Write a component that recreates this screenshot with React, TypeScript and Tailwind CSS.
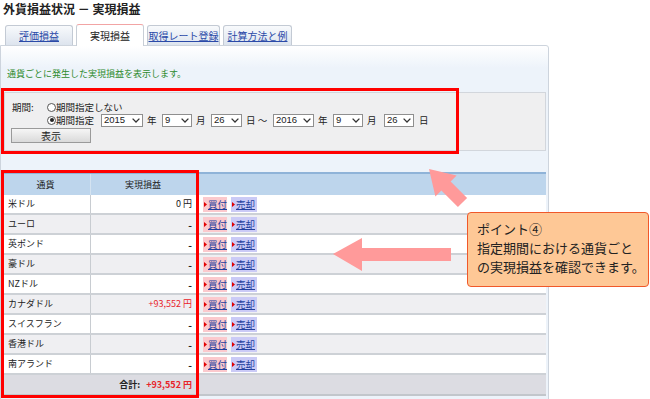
import React from "react";

function Sel({ v, w }: { v: string; w: string }) {
  return (
    <div
      className={`${w} h-[13px] border border-[#8f8f8f] bg-white flex items-center justify-between pl-[2px] pr-[2px] text-[9.5px] leading-none text-[#222]`}
    >
      <span className="font-['Liberation_Sans',sans-serif]">{v}</span>
      <svg width="8" height="5" viewBox="0 0 8 5">
        <path d="M0.6 0.6 L4 4 L7.4 0.6" stroke="#333" strokeWidth="1.3" fill="none" />
      </svg>
    </div>
  );
}

function Radio({ checked }: { checked?: boolean }) {
  return (
    <span className="w-[9px] h-[9px] rounded-full border border-[#555] bg-white flex items-center justify-center shrink-0">
      {checked && <span className="w-[4px] h-[4px] rounded-full bg-[#222]" />}
    </span>
  );
}

function Tri() {
  return (
    <svg width="3" height="5" viewBox="0 0 3 5" className="shrink-0">
      <path d="M0 0 L3 2.5 L0 5 Z" fill="#e00000" />
    </svg>
  );
}

const rows: { n: string; v: string; red?: boolean }[] = [
  { n: "米ドル", v: "0 円" },
  { n: "ユーロ", v: "-" },
  { n: "英ポンド", v: "-" },
  { n: "豪ドル", v: "-" },
  { n: "NZドル", v: "-" },
  { n: "カナダドル", v: "+93,552 円", red: true },
  { n: "スイスフラン", v: "-" },
  { n: "香港ドル", v: "-" },
  { n: "南アランド", v: "-" },
];

export default function App() {
  return (
    <div className="relative w-[650px] h-[399px] overflow-hidden bg-white text-[#222] font-['Noto_Sans_CJK_JP','Liberation_Sans',sans-serif]">
      {/* title */}
      <div className="h-[24px] pl-[3px] text-[12px] leading-[18px] font-bold text-[#222]">
        外貨損益状況 － 実現損益
      </div>

      {/* tabs */}
      <div className="h-[21px] flex items-end pl-[5px] gap-[3px] relative z-10">
        <div className="w-[68px] h-[20px] border border-b-0 border-[#c3cad4] rounded-t-[3px] bg-linear-to-b from-[#f8fafc] to-[#dde4ee] flex items-center justify-center text-[10px] text-[#2b4aa8] underline">
          評価損益
        </div>
        <div className="w-[68px] h-[22px] -mb-px border border-b-0 border-[#c8ced6] border-t-[#f2a4a4] rounded-t-[3px] bg-white flex items-center justify-center text-[10px] text-[#222]">
          実現損益
        </div>
        <div className="w-[73px] h-[20px] border border-b-0 border-[#c3cad4] rounded-t-[3px] bg-linear-to-b from-[#f8fafc] to-[#dde4ee] flex items-center justify-center text-[10px] text-[#2b4aa8] underline">
          取得レート登録
        </div>
        <div className="w-[69px] h-[20px] border border-b-0 border-[#c3cad4] rounded-t-[3px] bg-linear-to-b from-[#f8fafc] to-[#dde4ee] flex items-center justify-center text-[10px] text-[#2b4aa8] underline">
          計算方法と例
        </div>
      </div>

      {/* panel */}
      <div className="w-[549px] h-[360px] border border-[#cdd4dd] rounded-tr-[3px] bg-[linear-gradient(#ffffff,#edf3fa_22px,#edf3fa)]">
        <div className="h-[46px] pt-[21px] pl-[6px] text-[9px] leading-[14px] text-[#2d8a2d]">
          通貨ごとに発生した実現損益を表示します。
        </div>

        {/* form box */}
        <div className="ml-[3px] w-[542px] h-[59px] border border-[#d2d6dc] bg-[#efeff0] pt-[8px] pl-[7px] text-[9.5px] text-[#222]">
          <div className="flex">
            <div className="w-[35px] h-[12px] leading-[12px]">期間:</div>
            <div className="flex flex-col">
              <div className="h-[12px] flex items-center gap-[0px]">
                <Radio />
                <span className="leading-[12px]">期間指定しない</span>
              </div>
              <div className="h-[14px] flex items-center">
                <div className="w-[54px] flex items-center">
                  <Radio checked />
                  <span className="leading-[12px]">期間指定</span>
                </div>
                <Sel v="2015" w="w-[42px]" />
                <span className="w-[19px] pl-[4px]">年</span>
                <Sel v="9" w="w-[30px]" />
                <span className="w-[19px] pl-[4px]">月</span>
                <Sel v="26" w="w-[31px]" />
                <span className="w-[31px] pl-[4px]">日 ～</span>
                <Sel v="2016" w="w-[41px]" />
                <span className="w-[19px] pl-[4px]">年</span>
                <Sel v="9" w="w-[30px]" />
                <span className="w-[21px] pl-[4px]">月</span>
                <Sel v="26" w="w-[30px]" />
                <span className="pl-[5px]">日</span>
              </div>
            </div>
          </div>
          <div className="mt-[1px] -ml-[1px] w-[80px] h-[15px] border border-[#9a9a9a] bg-linear-to-b from-[#f6f6f6] to-[#dadada] flex items-center justify-center text-[10px]">
            表示
          </div>
        </div>

        {/* table */}
        <div className="mt-[21px] w-[545px] text-[9px] text-[#222]">
          <div className="h-[23px] border-t-2 border-[#8fb3d8] bg-[#bdd5ec] grid grid-cols-[90px_104px_1fr]">
            <div className="flex items-center justify-center border-r border-[#d4e3f1]">通貨</div>
            <div className="flex items-center justify-center">実現損益</div>
            <div />
          </div>
          {rows.map((r, i) => (
            <div
              key={r.n}
              className={`h-[20px] border-b-2 border-[#cdd1d6] grid grid-cols-[90px_104px_1fr] ${i % 2 === 0 ? "bg-white" : "bg-[#efeff2]"}`}
            >
              <div className="flex items-center pl-[7px] border-r border-[#c8ccd1]">{r.n}</div>
              <div
                className={`flex items-center justify-end pr-[3px] ${r.red ? "text-[#e8232a]" : ""} ${r.v === "-" ? "font-bold text-[10px]" : ""}`}
              >
                {r.v}
              </div>
              <div className="flex items-center pl-[8px] gap-[4px]">
                <div className="w-[24px] h-[15px] bg-[#fbc9cd] flex items-center gap-[1px] pl-[1px]">
                  <Tri />
                  <span className="text-[9.5px] text-[#23409e] underline">買付</span>
                </div>
                <div className="w-[26px] h-[15px] bg-[#cacaf6] flex items-center gap-[1px] pl-[1px]">
                  <Tri />
                  <span className="text-[9.5px] text-[#23409e] underline">売却</span>
                </div>
              </div>
            </div>
          ))}
          <div className="h-[21px] border-b-2 border-[#c2c6cb] bg-[#dcdce2] grid grid-cols-[194px_1fr]">
            <div className="flex items-center justify-end pr-[3px] font-bold">
              <span>合計:</span>
              <span className="ml-[6px] text-[#e8232a]">+93,552 円</span>
            </div>
            <div />
          </div>
        </div>
      </div>

      {/* red annotation boxes */}
      <div className="absolute left-[1px] top-[88px] w-[458px] h-[66px] border-[3px] border-[#ff0000]" />
      <div className="absolute left-[1px] top-[170px] w-[198px] h-[228px] border-[3px] border-[#ff0000]" />

      {/* arrows */}
      <svg className="absolute left-0 top-0" width="650" height="399" viewBox="0 0 650 399">
        <polygon
          points="333,254 362,238 362,248 451,248 451,261 362,261 362,271"
          fill="#ff9a9a"
        />
        <polygon
          points="429,169 456.6,175.4 450.6,181.4 467.1,197.9 457.9,207.1 441.4,190.6 435.4,196.6"
          fill="#ff9a9a"
        />
      </svg>

      {/* callout */}
      <div className="absolute left-[467px] top-[212px] w-[182px] h-[75px] border-[1.5px] border-[#f0582a] rounded-[4px] bg-[#fec896] pt-[6px] pl-[9px] text-[13px] leading-[19px] text-[#222]">
        <div>ポイント④</div>
        <div>指定期間における通貨ごと</div>
        <div>の実現損益を確認できます。</div>
      </div>
    </div>
  );
}
